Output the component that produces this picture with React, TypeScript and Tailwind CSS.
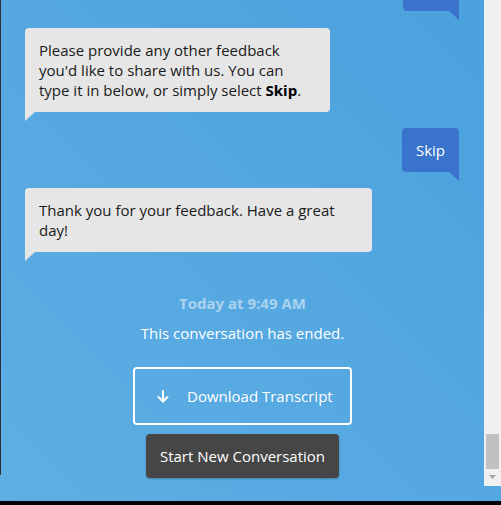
import React from 'react';

const font = { fontFamily: '"Open Sans", "Liberation Sans", sans-serif' };

const LeftTail = () => (
    <svg className="absolute left-0 top-full" width="10" height="9" viewBox="0 0 10 9">
        <polygon points="0,0 10,0 0,9" fill="#e6e6e6" />
    </svg>
);

const RightTail = () => (
    <svg className="absolute right-0 top-full" width="10" height="9" viewBox="0 0 10 9">
        <polygon points="0,0 10,0 10,9" fill="#3a73cc" />
    </svg>
);

const AgentBubble: React.FC<{ width: string; children: React.ReactNode; className?: string }> = ({ width, children, className }) => (
    <div className={`relative self-start ml-[24px] ${width} bg-[#e6e6e6] rounded-[4px] rounded-bl-none pl-[14px] pr-[21px] py-[12px] text-[15px] leading-[20px] text-[#1a1a1a] ${className ?? ''}`}>
        {children}
        <LeftTail />
    </div>
);

export default function App() {
    return (
        <div className="w-[501px] h-[505px] flex flex-col bg-black overflow-hidden" style={font}>
            <div className="h-[501px] flex bg-linear-to-tr from-[#5faee4] to-[#4aa1dd]">
                {/* window edge */}
                <div className="w-px h-[475px] bg-[#2c3039] self-start" />

                {/* chat */}
                <div className="flex-1 flex flex-col">
                    <div className="relative self-end mr-[25px] w-[56px] h-[11px] bg-[#3a73cc] rounded-b-[4px] rounded-br-none">
                        <RightTail />
                    </div>

                    <AgentBubble width="w-[305px]" className="mt-[17px]">
                        Please provide any other feedback you'd like to share with us. You can type it in below, or simply select <b className="font-bold text-black">Skip</b>.
                    </AgentBubble>

                    <div className="relative self-end mr-[25px] mt-[16px] bg-[#3a73cc] rounded-[4px] rounded-br-none px-[14px] py-[12px] text-[15px] leading-[20px] text-white">
                        Skip
                        <RightTail />
                    </div>

                    <AgentBubble width="w-[347px]" className="mt-[16px]">
                        Thank you for your feedback. Have a great day!
                    </AgentBubble>

                    <p className="mt-[41px] text-center text-[15px] leading-[20px] font-bold text-white/50">Today at 9:49 AM</p>
                    <p className="mt-[10px] text-center text-[15px] leading-[20px] text-white">This conversation has ended.</p>

                    <button className="mt-[24px] self-center w-[219px] h-[58px] border-2 border-white rounded-[4px] flex items-center pl-[22px] text-white text-[15px]">
                        <svg width="12" height="13" viewBox="0 0 12 13" fill="none" stroke="white" strokeWidth="2" strokeLinecap="round" strokeLinejoin="round">
                            <line x1="6" y1="1" x2="6" y2="11.5" />
                            <polyline points="1.5,7 6,11.5 10.5,7" />
                        </svg>
                        <span className="ml-[18px]">Download Transcript</span>
                    </button>

                    <button className="mt-[9px] self-center h-[44px] px-[14px] bg-[#464646] rounded-[4px] shadow-[0_1px_2px_rgba(0,0,0,0.25)] text-white text-[15px]">
                        Start New Conversation
                    </button>
                </div>

                {/* scrollbar */}
                <div className="w-[17px] h-[486px] self-start bg-[#f0f0f0] flex flex-col items-center justify-end pb-[7px]">
                    <div className="w-[13px] h-[35px] bg-[#c1c1c1]" />
                    <svg className="mt-[6px]" width="7" height="4" viewBox="0 0 7 4">
                        <polygon points="0,0 7,0 3.5,4" fill="#a3a3a3" />
                    </svg>
                </div>
            </div>
            <div className="h-[4px] bg-black" />
        </div>
    );
}
